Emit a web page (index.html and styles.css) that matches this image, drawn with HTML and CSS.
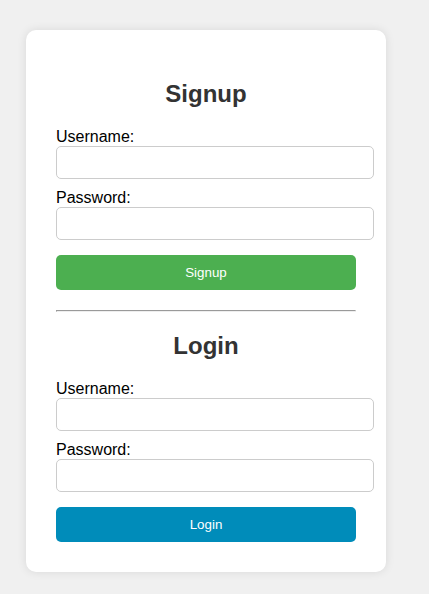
FILE: index.html
```html
<!DOCTYPE html>
<html>
<head>
<meta charset="utf-8">
<link rel="stylesheet" href="styles.css">
</head>
<body>
<div class="card">
  <h2>Signup</h2>
  <form class="form">
    <label>Username:</label>
    <input type="text">
    <label>Password:</label>
    <input type="password">
    <button type="button" class="btn btn-green">Signup</button>
  </form>
  <hr class="divider">
  <h2>Login</h2>
  <form class="form">
    <label>Username:</label>
    <input type="text">
    <label>Password:</label>
    <input type="password">
    <button type="button" class="btn btn-blue">Login</button>
  </form>
</div>
</body>
</html>
```

FILE: styles.css
```css
html, body {
  margin: 0;
  padding: 0;
}
body {
  background: #f0f0f0;
  font-family: "Liberation Sans", Arial, sans-serif;
  padding: 30px 26px;
}
.card {
  width: 300px;
  background: #fff;
  padding: 30px;
  border-radius: 10px;
  box-shadow: 0 0 10px rgba(0,0,0,0.1);
}
h2 {
  text-align: center;
  color: #333;
  font-size: 24px;
  margin: 20px 0;
}
.form {
  margin: 0;
}
.form label {
  display: block;
  font-size: 16px;
  color: #000;
}
.form input {
  display: block;
  width: 100%;
  padding: 8px;
  margin: 0 0 10px 0;
  border: 1px solid #ccc;
  border-radius: 5px;
  font-family: "Liberation Sans", Arial, sans-serif;
  font-size: 13.333px;
  box-sizing: content-box;
}
.btn {
  display: block;
  width: 100%;
  margin-top: 15px;
  padding: 10px;
  border: none;
  border-radius: 5px;
  color: #fff;
  font-family: "Liberation Sans", Arial, sans-serif;
  font-size: 13.333px;
  cursor: pointer;
}
.btn-green { background: #4caf50; }
.btn-blue { background: #008cba; }
.divider {
  margin: 20px 0;
}
```
